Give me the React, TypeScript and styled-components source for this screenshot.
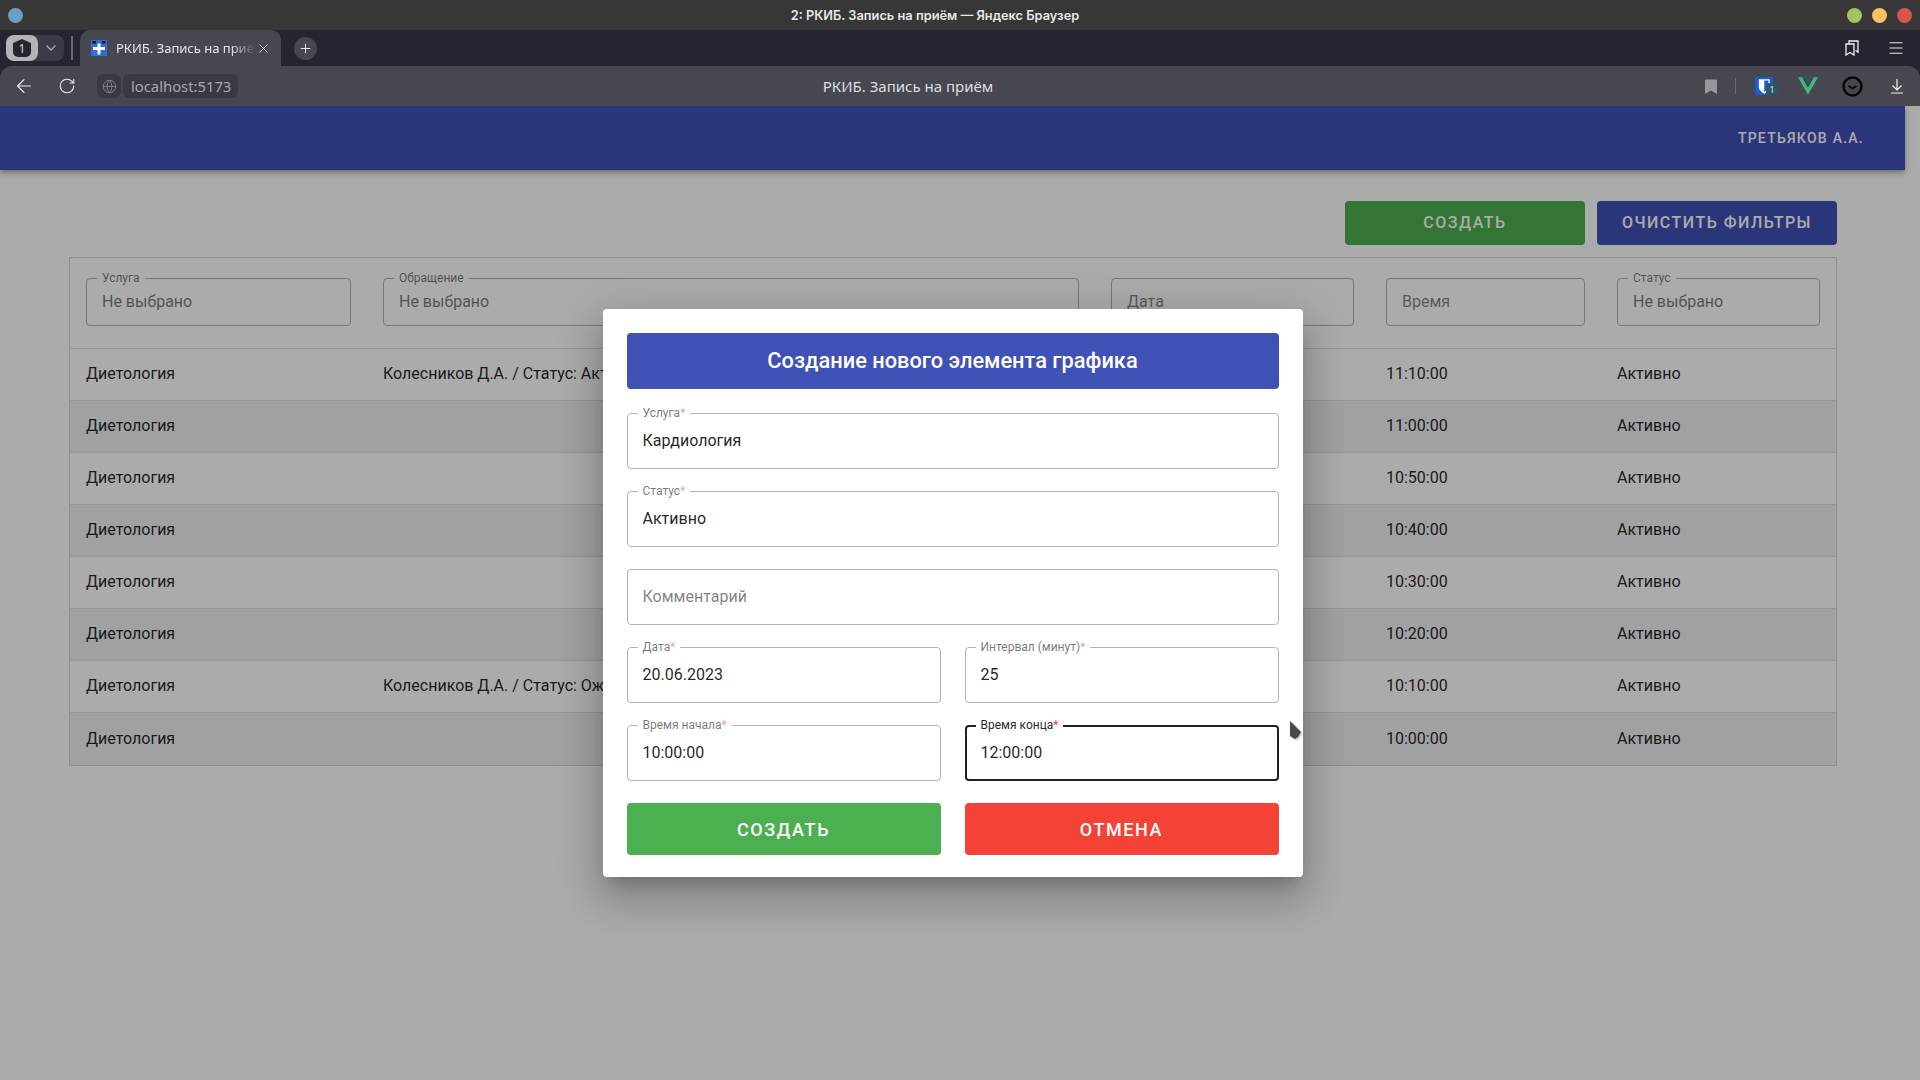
import styled, { createGlobalStyle } from 'styled-components'
import { ArrowLeft, ChevronDown, Globe, Menu, Plus, RotateCw, X } from 'lucide-react'

const GlobalStyle = createGlobalStyle`
	* {
		box-sizing: border-box;
	}
	html,
	body {
		margin: 0;
		height: 100%;
		overflow: hidden;
		background: #fff;
		font-family: Roboto, 'Liberation Sans', sans-serif;
	}
`

const Wrapper = styled.div`
	display: flex;
	flex-direction: column;
	width: 1920px;
	height: 1080px;
	background-color: #23262f;
`

/* browser chrome */
const TitleBar = styled.div`
	display: grid;
	grid-template-columns: 100px 1fr 150px;
	align-items: center;
	height: 30px;
	background-color: #373737;
	padding: 0 8px;
`
const WindowTitle = styled.div`
	text-align: center;
	font-family: Inter, 'Liberation Sans', sans-serif;
	font-size: 12.8px;
	font-weight: 600;
	color: #e8e8e8;
`
const Dots = styled.div<{ $start?: boolean }>`
	display: flex;
	gap: 10px;
	justify-content: ${(p) => (p.$start ? 'flex-start' : 'flex-end')};
`
const Dot = styled.span<{ $color: string }>`
	width: 15px;
	height: 15px;
	border-radius: 50%;
	background-color: ${(p) => p.$color};
`
const TabBar = styled.div`
	display: flex;
	align-items: flex-end;
	height: 36px;
	background-color: #23262f;
	padding-left: 6px;
`
const TabSwitcher = styled.div`
	display: flex;
	align-items: center;
	align-self: center;
	width: 58px;
	height: 26px;
	border-radius: 8px;
	background-color: #3a3c45;
	color: #a9aab0;
`
const SwitcherChevron = styled(ChevronDown)`
	margin-left: 5px;
`
const TabCount = styled.div`
	display: flex;
	align-items: center;
	justify-content: center;
	width: 32px;
	height: 26px;
	border-radius: 8px;
	background-color: #b4b4b6;
`
const CountShape = styled.span`
	display: flex;
	align-items: center;
	justify-content: center;
	width: 18px;
	height: 18px;
	padding-top: 1px;
	border-radius: 5px;
	clip-path: polygon(50% 0, 100% 22%, 100% 100%, 0 100%, 0 22%);
	background-color: #23262f;
	font-family: 'Noto Sans', sans-serif;
	font-size: 12px;
	color: #d8d8d8;
`
const TabDivider = styled.span`
	align-self: center;
	width: 2px;
	height: 24px;
	margin: 0 7px;
	background-color: #6b6d74;
`
const Tab = styled.div`
	display: flex;
	align-items: center;
	width: 201px;
	height: 36px;
	padding: 0 10px 0 11px;
	border-radius: 10px 10px 0 0;
	background-color: #47474f;
	color: #e6e6e8;
`
const TabText = styled.span`
	flex: 1;
	margin-left: 9px;
	overflow: hidden;
	white-space: nowrap;
	font-family: 'Noto Sans', sans-serif;
	font-size: 13px;
	mask-image: linear-gradient(to right, #000 82%, transparent 100%);
`
const NewTab = styled.div`
	display: flex;
	align-items: center;
	justify-content: center;
	align-self: center;
	width: 23px;
	height: 23px;
	margin-left: 13px;
	border-radius: 50%;
	background-color: #47474f;
	color: #f2f2f2;
`
const TabBarEnd = styled.div`
	display: flex;
	align-items: center;
	align-self: center;
	gap: 28px;
	margin-left: auto;
	padding-right: 15px;
	color: #f0f0f0;
`
const Toolbar = styled.div`
	display: grid;
	grid-template-columns: 300px 1fr 404px;
	align-items: center;
	height: 40px;
	background-color: #47474f;
	border-radius: 12px 12px 0 0;
`
const ToolbarLeft = styled.div`
	display: flex;
	align-items: center;
	padding-left: 13px;
	color: #f0f0f0;
`
const NavButton = styled.span`
	display: flex;
	width: 44px;
`
const ReloadButton = styled(NavButton)`
	padding-left: 1px;
`
const GlobeChip = styled.span`
	display: flex;
	align-items: center;
	justify-content: center;
	width: 24px;
	height: 24px;
	margin-left: -4px;
	border-radius: 6px;
	background-color: #383942;
	color: #8d8e94;
`
const AddressChip = styled.span`
	display: flex;
	align-items: center;
	height: 24px;
	margin-left: 2px;
	padding: 0 7px 0 8px;
	border-radius: 6px;
	background-color: #383942;
	font-family: 'Noto Sans', sans-serif;
	font-size: 14.8px;
	color: #a9aab0;
`
const PageTitle = styled.div`
	text-align: center;
	font-family: 'Noto Sans', sans-serif;
	font-size: 15px;
	color: #dedee0;
`
const ToolbarRight = styled.div`
	display: flex;
	align-items: center;
	justify-content: flex-end;
	padding-right: 1px;
	color: #f0f0f0;
`
const IconSlot = styled.span`
	display: flex;
	align-items: center;
	justify-content: center;
	width: 44px;
`
const ShieldSlot = styled(IconSlot)`
	padding-left: 6px;
`
const DownloadSlot = styled(IconSlot)`
	width: 45px;
`
const BookmarkSlot = styled.span`
	display: flex;
	margin-right: 18px;
`
const ToolbarDivider = styled.span`
	width: 1px;
	height: 16px;
	margin-right: 6px;
	background-color: #6b6d74;
`

/* page */
const Viewport = styled.div`
	position: relative;
	flex: 1;
	overflow: hidden;
	background-color: #fff;
`
const Page = styled.div`
	width: 1905px;
`
const Navbar = styled.header`
	display: flex;
	align-items: center;
	justify-content: flex-end;
	height: 64px;
	padding-right: 41px;
	background-color: #3f51b5;
	box-shadow: 0 2px 4px -1px rgba(0, 0, 0, 0.2), 0 4px 5px 0 rgba(0, 0, 0, 0.14), 0 1px 10px 0 rgba(0, 0, 0, 0.12);
`
const UserName = styled.span`
	font-size: 14px;
	font-weight: 500;
	letter-spacing: 1.25px;
	color: #fff;
`
const Main = styled.main`
	padding: 31px 68px 0 69px;
`
const Actions = styled.div`
	display: flex;
	justify-content: flex-end;
	gap: 12px;
	margin-bottom: 12px;
`
const ActionButton = styled.button<{ $color: string }>`
	width: 240px;
	height: 44px;
	padding: 0 0 2px;
	border: 0;
	border-radius: 4px;
	background-color: ${(p) => p.$color};
	font-family: inherit;
	font-size: 16px;
	font-weight: 500;
	letter-spacing: 1.5px;
	text-transform: uppercase;
	color: #fff;
`
const TableBox = styled.section`
	border: 1px solid #d4d4d4;
`
const columns = `265px 696px 243px 199px 203px`
const FilterRow = styled.div`
	display: grid;
	grid-template-columns: ${columns};
	gap: 32px;
	height: 90px;
	padding: 20px 16px 0;
`
const Row = styled.div<{ $striped: boolean }>`
	display: grid;
	grid-template-columns: ${columns};
	gap: 32px;
	align-items: center;
	height: 52px;
	padding: 0 16px 2px;
	border-top: 1px solid #e0e0e0;
	background-color: ${(p) => (p.$striped ? '#eff0f2' : '#fff')};
	font-size: 16px;
	color: rgba(0, 0, 0, 0.87);

	&:last-child {
		height: 53px;
	}
`

/* outlined fields, the same kind in the filters and in the dialog */
const Field = styled.label<{ $height: number; $focused?: boolean }>`
	position: relative;
	display: block;
	height: ${(p) => p.$height}px;
	border: ${(p) => (p.$focused ? '2px solid #212121' : '1px solid #b4b4b4')};
	border-radius: 4px;
`
const FieldLabel = styled.span<{ $focused?: boolean }>`
	position: absolute;
	top: ${(p) => (p.$focused ? '-9px' : '-8px')};
	left: ${(p) => (p.$focused ? '9px' : '10px')};
	padding: 0 5px;
	background-color: #fff;
	font-size: 12px;
	line-height: 14px;
	white-space: nowrap;
	color: ${(p) => (p.$focused ? 'rgba(0, 0, 0, 0.87)' : 'rgba(0, 0, 0, 0.55)')};
`
const Required = styled.span<{ $focused?: boolean }>`
	color: ${(p) => (p.$focused ? '#f44336' : '#f9a19a')};
`
const FieldInput = styled.input<{ $focused?: boolean; $muted?: boolean }>`
	display: block;
	width: 100%;
	height: 100%;
	padding: 0 ${(p) => (p.$focused ? '14px' : '15px')} 2px;
	border: 0;
	outline: 0;
	background: transparent;
	font-family: inherit;
	font-size: 16px;
	color: ${(p) => (p.$muted ? 'rgba(0, 0, 0, 0.55)' : 'rgba(0, 0, 0, 0.87)')};

	&::placeholder {
		color: rgba(0, 0, 0, 0.5);
		opacity: 1;
	}
`

/* dialog */
const Backdrop = styled.div`
	position: absolute;
	inset: 0;
	display: flex;
	align-items: center;
	justify-content: center;
	padding-right: 15px;
	background-color: rgba(0, 0, 0, 0.33);
`
const Dialog = styled.form`
	display: flex;
	flex-direction: column;
	gap: 22px;
	width: 700px;
	padding: 24px 24px 22px;
	border-radius: 4px;
	background-color: #fff;
	box-shadow: 0 11px 15px -7px rgba(0, 0, 0, 0.2), 0 24px 38px 3px rgba(0, 0, 0, 0.14), 0 9px 46px 8px rgba(0, 0, 0, 0.12);
`
const DialogTitle = styled.h2`
	display: flex;
	align-items: center;
	justify-content: center;
	height: 56px;
	margin: 0 0 2px;
	padding-bottom: 2px;
	border-radius: 4px;
	background-color: #3f51b5;
	font-size: 21.8px;
	font-weight: 500;
	color: #fff;
`
const TwoColumns = styled.div`
	display: grid;
	grid-template-columns: 1fr 1fr;
	gap: 24px;
`
const DialogButton = styled.button<{ $color: string }>`
	height: 52px;
	border: 0;
	border-radius: 4px;
	background-color: ${(p) => p.$color};
	font-family: inherit;
	font-size: 18px;
	font-weight: 500;
	letter-spacing: 1.6px;
	text-transform: uppercase;
	color: #fff;
`
const Cursor = styled.svg`
	position: absolute;
	left: 1289px;
	top: 614px;
	filter: drop-shadow(1px 1px 1px rgba(0, 0, 0, 0.3));
`

const TabIcon = () => (
	<svg width="16" height="16" viewBox="0 0 16 16">
		<rect width="16" height="16" fill="#2f6bd9" />
		<path d="M6.500 3.500h3V7H14v3H9.500v4.500h-3V10H2V7h4.500z" fill="#fff" />
		<rect x="1.500" y="1" width="3.500" height="2.500" fill="#10131c" />
		<rect x="11" y="1" width="3.500" height="2.500" fill="#10131c" />
	</svg>
)

const BookmarksIcon = () => (
	<svg width="14" height="16" viewBox="0 0 14 16" fill="none" stroke="#f2f2f2" strokeWidth="1.300">
		<path d="M1 4h8v11l-4-2.500L1 15z" />
		<path d="M4 4V1h9v11l-2.500-1.500" />
	</svg>
)

const BookmarkIcon = () => (
	<svg width="12" height="15" viewBox="0 0 12 15">
		<path d="M1 0.500h10a1 1 0 0 1 1 1V15l-6-3.500L0 15V1.500a1 1 0 0 1 1-1z" fill="#96969b" />
	</svg>
)

const ShieldIcon = () => (
	<svg width="24" height="20" viewBox="0 0 26 22">
		<rect x="0" y="1" width="20" height="20" rx="3" fill="#175ddc" />
		<path d="M4 3.500h12v8c0 4-3 6-6 8-3-2-6-4-6-8z" fill="#fff" />
		<path d="M10 5v12.500c2-1.300 4.500-3 4.500-6V5z" fill="#175ddc" />
		<rect x="12" y="8" width="13" height="13" rx="2" fill="#2d5468" />
		<text x="18.500" y="18.500" textAnchor="middle" fontSize="10" fontFamily="Noto Sans, sans-serif" fill="#d8e2e8">
			1
		</text>
	</svg>
)

const VueIcon = () => (
	<svg width="20" height="18" viewBox="0 0 196 170">
		<path d="M120.830 0L98 39.540 75.170 0H0l98 169.740L196 0z" fill="#41b883" />
		<path d="M120.830 0L98 39.540 75.170 0H39.060L98 102.100 156.940 0z" fill="#34495e" />
	</svg>
)

const CheckCircleIcon = () => (
	<svg width="21" height="21" viewBox="0 0 21 21" fill="none" stroke="#050505" strokeWidth="2.400">
		<circle cx="10.500" cy="10.500" r="9" />
		<path d="M6.500 10l4 2.500 4-2.500" strokeWidth="1.600" />
	</svg>
)

const DownloadIcon = () => (
	<svg width="14" height="16" viewBox="0 0 14 16" fill="none" stroke="#f2f2f2" strokeWidth="1.200">
		<path d="M7 1v11M2.500 7.500L7 12l4.500-4.500M1 15h12" />
	</svg>
)

const rows = [
	{ time: '11:10:00', request: 'Колесников Д.А. / Статус: Активно' },
	{ time: '11:00:00', request: '' },
	{ time: '10:50:00', request: '' },
	{ time: '10:40:00', request: '' },
	{ time: '10:30:00', request: '' },
	{ time: '10:20:00', request: '' },
	{ time: '10:10:00', request: 'Колесников Д.А. / Статус: Ожидает' },
	{ time: '10:00:00', request: '' },
]

type OutlinedProps = {
	label?: string
	value?: string
	placeholder?: string
	required?: boolean
	focused?: boolean
	muted?: boolean
	height?: number
}

const Outlined = ({ label, value, placeholder, required, focused, muted, height = 56 }: OutlinedProps) => (
	<Field $height={height} $focused={focused}>
		{label && (
			<FieldLabel $focused={focused}>
				{label}
				{required && <Required $focused={focused}>*</Required>}
			</FieldLabel>
		)}
		<FieldInput $focused={focused} $muted={muted} defaultValue={value} placeholder={placeholder} readOnly />
	</Field>
)

export default function App() {
	return (
		<Wrapper>
			<GlobalStyle />
			<TitleBar>
				<Dots $start>
					<Dot $color="#6a9fc5" />
				</Dots>
				<WindowTitle>2: РКИБ. Запись на приём — Яндекс Браузер</WindowTitle>
				<Dots>
					<Dot $color="#a4c463" />
					<Dot $color="#fdbf65" />
					<Dot $color="#d9534f" />
				</Dots>
			</TitleBar>
			<TabBar>
				<TabSwitcher>
					<TabCount>
						<CountShape>1</CountShape>
					</TabCount>
					<SwitcherChevron size={16} />
				</TabSwitcher>
				<TabDivider />
				<Tab>
					<TabIcon />
					<TabText>РКИБ. Запись на приём</TabText>
					<X size={15} strokeWidth={1.5} />
				</Tab>
				<NewTab>
					<Plus size={15} strokeWidth={1.5} />
				</NewTab>
				<TabBarEnd>
					<BookmarksIcon />
					<Menu size={18} strokeWidth={1.5} />
				</TabBarEnd>
			</TabBar>
			<Toolbar>
				<ToolbarLeft>
					<NavButton>
						<ArrowLeft size={22} strokeWidth={1.3} />
					</NavButton>
					<ReloadButton>
						<RotateCw size={18} strokeWidth={1.4} />
					</ReloadButton>
					<GlobeChip>
						<Globe size={15} strokeWidth={1.3} />
					</GlobeChip>
					<AddressChip>localhost:5173</AddressChip>
				</ToolbarLeft>
				<PageTitle>РКИБ. Запись на приём</PageTitle>
				<ToolbarRight>
					<BookmarkSlot>
						<BookmarkIcon />
					</BookmarkSlot>
					<ToolbarDivider />
					<ShieldSlot>
						<ShieldIcon />
					</ShieldSlot>
					<IconSlot>
						<VueIcon />
					</IconSlot>
					<IconSlot>
						<CheckCircleIcon />
					</IconSlot>
					<DownloadSlot>
						<DownloadIcon />
					</DownloadSlot>
				</ToolbarRight>
			</Toolbar>
			<Viewport>
				<Page>
					<Navbar>
						<UserName>ТРЕТЬЯКОВ А.А.</UserName>
					</Navbar>
					<Main>
						<Actions>
							<ActionButton $color="#4caf50">Создать</ActionButton>
							<ActionButton $color="#3f51b5">Очистить фильтры</ActionButton>
						</Actions>
						<TableBox>
							<FilterRow>
								<Outlined height={48} label="Услуга" value="Не выбрано" muted />
								<Outlined height={48} label="Обращение" value="Не выбрано" muted />
								<Outlined height={48} placeholder="Дата" />
								<Outlined height={48} placeholder="Время" />
								<Outlined height={48} label="Статус" value="Не выбрано" muted />
							</FilterRow>
							{rows.map((row, i) => (
								<Row key={row.time} $striped={i % 2 === 1}>
									<span>Диетология</span>
									<span>{row.request}</span>
									<span />
									<span>{row.time}</span>
									<span>Активно</span>
								</Row>
							))}
						</TableBox>
					</Main>
				</Page>
				<Backdrop>
					<Dialog>
						<DialogTitle>Создание нового элемента графика</DialogTitle>
						<Outlined label="Услуга" value="Кардиология" required />
						<Outlined label="Статус" value="Активно" required />
						<Outlined placeholder="Комментарий" />
						<TwoColumns>
							<Outlined label="Дата" value="20.06.2023" required />
							<Outlined label="Интервал (минут)" value="25" required />
						</TwoColumns>
						<TwoColumns>
							<Outlined label="Время начала" value="10:00:00" required />
							<Outlined label="Время конца" value="12:00:00" required focused />
						</TwoColumns>
						<TwoColumns>
							<DialogButton $color="#4caf50">Создать</DialogButton>
							<DialogButton $color="#f44336">Отмена</DialogButton>
						</TwoColumns>
					</Dialog>
				</Backdrop>
				<Cursor width="14" height="20" viewBox="0 0 14 20">
					<path d="M1 1l11 11-3 5-3 2-5-3z" fill="#4a4a4a" />
				</Cursor>
			</Viewport>
		</Wrapper>
	)
}
